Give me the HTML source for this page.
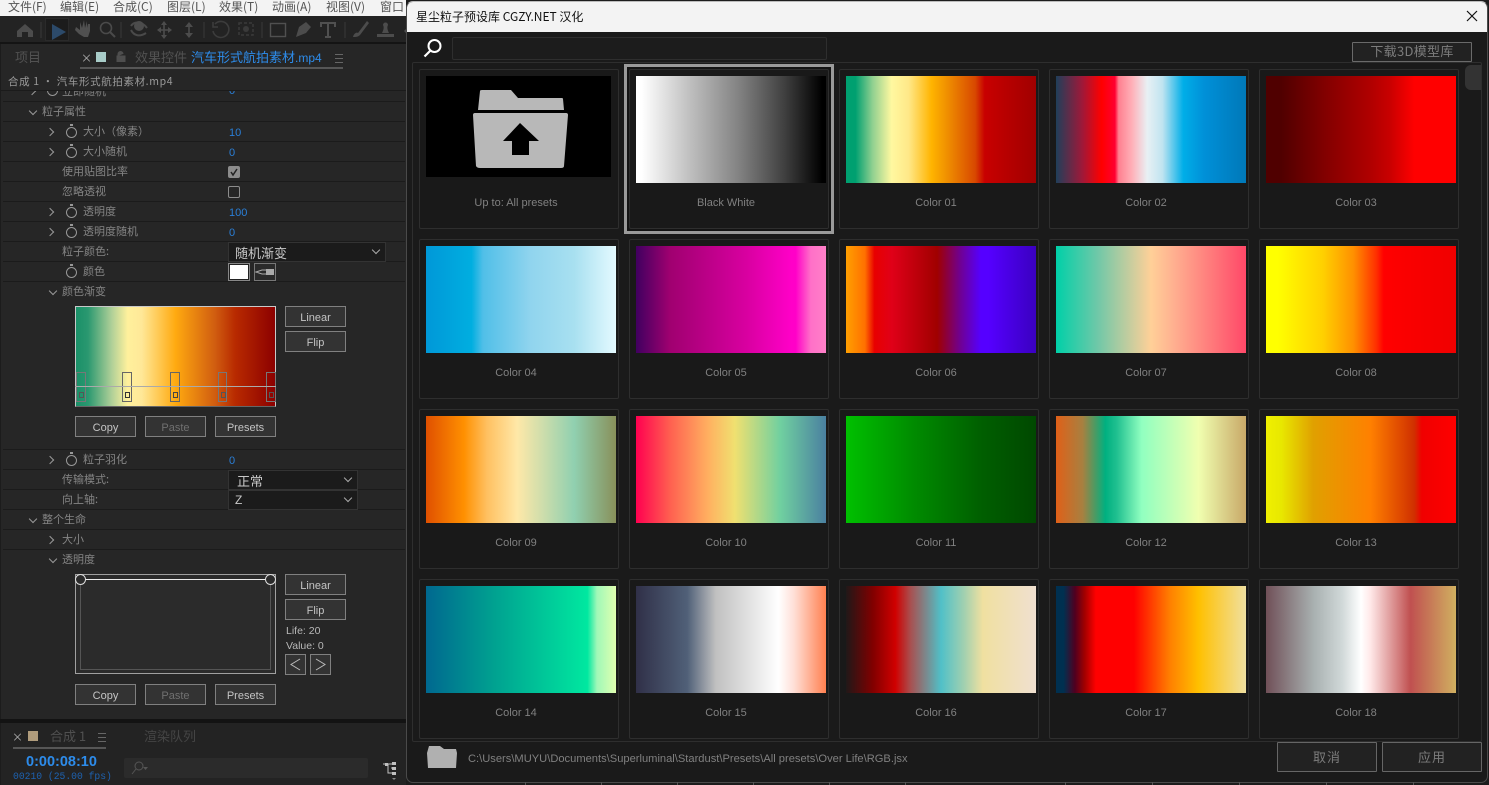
<!DOCTYPE html>
<html lang="zh"><head><meta charset="utf-8"><title>星尘粒子预设库</title>
<style>
*{box-sizing:border-box}
html,body{margin:0;padding:0;width:1489px;height:785px;overflow:hidden;background:#1c1c1c}
body{position:relative;font-family:"Liberation Sans","WenQuanYi Zen Hei","Noto Sans CJK SC",sans-serif}
div,span,svg{position:absolute}
.t{white-space:nowrap;line-height:16px;height:16px;font-size:11px;color:#858585;font-family:"WenQuanYi Zen Hei","Noto Sans CJK SC",sans-serif}
.v{color:#2a7fd8;font-size:11px;left:229px;font-family:"Liberation Sans",sans-serif;margin-top:1px}
.m{color:#555;font-size:12px;top:-1px}
.rl{left:3px;width:402px;height:1px;background:#1b1b1b}
.cr{width:6px;height:6px;border-top:1px solid #999;border-right:1px solid #999;transform:rotate(45deg)}
.cd{width:6px;height:6px;border-bottom:1px solid #999;border-right:1px solid #999;transform:rotate(45deg)}
.sw{width:11px;height:11px;border:1.5px solid #989898;border-radius:50%;left:66px}
.sw:before{content:"";position:absolute;left:3px;top:-4px;width:3px;height:2px;background:#989898}
.b{height:21px;width:61px;border:1px solid #808080;background:#333;color:#c4c4c4;font:11px/23px "Liberation Sans",sans-serif;text-align:center}
.sel{background:#1b1b1b;border:1px solid #333;height:20px;color:#c8c8c8;font-size:13px;line-height:19px;padding-left:6px;font-family:"WenQuanYi Zen Hei","Noto Sans CJK SC",sans-serif}
.sel i{position:absolute;right:6px;top:4px;width:6px;height:6px;border-bottom:1px solid #aaa;border-right:1px solid #aaa;transform:rotate(45deg)}
.st{top:372px;width:10px;height:30px;border:1.400px solid #777}
.st i{position:absolute;left:1.5px;top:19px;width:5px;height:6px;border:1px solid #555}
.c{width:200px;height:160px;border:1px solid #2e2e2e;border-radius:2px;background:#191919}
.g{left:6px;top:6px;width:190px;height:107px}
.l{left:0;width:192px;top:125px;text-align:center;font:11px/16px "Liberation Sans",sans-serif;color:#808080}
.ic{stroke:#4a4a4a;fill:none}
.tk{top:782px;width:1px;height:3px;background:#555}
</style></head><body>

<!-- Left app -->
<div style="left:0;top:0;width:406px;height:16px;background:#f3f3f3"></div>
<span class="t m" style="left:8px">文件(F)</span><span class="t m" style="left:60px">编辑(E)</span><span class="t m" style="left:113px">合成(C)</span><span class="t m" style="left:167px">图层(L)</span><span class="t m" style="left:219px">效果(T)</span><span class="t m" style="left:272px">动画(A)</span><span class="t m" style="left:326px">视图(V)</span><span class="t m" style="left:380px">窗口</span>

<div style="left:0;top:16px;width:406px;height:26px;background:#232323"></div>
<div style="left:45px;top:18px;width:24px;height:23px;background:#1c1c1c;border:1px solid #2a2a2a"></div>
<svg style="left:0;top:16px" width="406" height="26" viewBox="0 16 406 26">
<path d="M17 37V31L25 24 33 31V37H28V32H22V37Z" fill="#4c4c4c"/>
<path d="M52 24L66 32 52 40Z" fill="#2c4a6a"/>
<path d="M75 30L79 34 84 37H88L90 31V24H88L87 28V21L85 28 84 20 82 28 80 22 80 30 76 27Z" fill="#505050"/>
<circle cx="106" cy="28" r="5.5" class="ic" stroke-width="1.6"/><path d="M110 32L115 37" class="ic" stroke-width="2"/>
<path d="M131 26C134 21 142 21 147 28M146 33C140 37 134 36 131 30" class="ic" stroke-width="2"/><circle cx="139" cy="26" r="5" fill="#4c4c4c"/>
<path d="M164 24V36M158 30H170" stroke="#4c4c4c" stroke-width="1.6"/><path d="M164 21L161 25H167ZM164 39L161 35H167ZM157 30L161 27V33ZM172 30L168 27V33Z" fill="#4c4c4c"/>
<path d="M189 25V35" stroke="#4c4c4c" stroke-width="1.6"/><path d="M189 22L185 27H193ZM189 38L185 33H193Z" fill="#4c4c4c"/>
<path d="M215 24A8 8 0 1 1 213 31M213 22V27H218" stroke="#3c3c3c" stroke-width="1.6" fill="none"/>
<rect x="239" y="23" width="14" height="12" stroke="#3a3a3a" stroke-dasharray="3 2" fill="none" stroke-width="1.5"/><circle cx="246" cy="29" r="3" fill="#3a3a3a"/>
<rect x="270.500" y="23.500" width="15" height="13" stroke="#505050" stroke-width="1.400" fill="none"/>
<path d="M296 37L299 27 306 22 311 27 306 33Z" fill="#4c4c4c"/>
<path d="M321 27V23H335V27M328 23V37M325 37H331" stroke="#505050" stroke-width="2" fill="none"/>
<path d="M353 37C354 33 357 32 358 33L367 21 369 23 360 35C358 37 356 37 353 37Z" fill="#4c4c4c"/>
<path d="M377 37V34H394V37ZM382 33C384 29 384 27 383 25A2.500 2.500 0 1 1 388 25C387 27 387 29 389 33Z" fill="#4c4c4c"/>
<path d="M404 31L408 27V35Z" fill="#4c4c4c"/>
<path d="M41 22V38M121 22V38M204 22V38M262 22V38M345 22V38" stroke="#3a3a3a"/>
</svg>
<div style="left:0;top:42px;width:406px;height:2px;background:#141414"></div>
<div style="left:1px;top:44px;width:405px;height:678px;background:#262626"></div>

<span class="t" style="left:15px;top:49px;font-size:13px;color:#525252">项目</span>
<span class="t" style="left:81px;top:50px;font-size:11px;color:#b0b0b0">×</span>
<div style="left:96px;top:52px;width:10px;height:10px;background:#a8ccc8"></div>
<svg style="left:116px;top:51px" width="10" height="11"><path d="M2 5V3A2.500 2.500 0 0 1 7 3M1 5H9V11H1Z" fill="#4e4e4e" stroke="#4e4e4e"/></svg>
<span class="t" style="left:135px;top:49px;font-size:13px;color:#525252">效果控件</span>
<span class="t" style="left:191px;top:49px;font-size:13px;color:#2d8ceb">汽车形式航拍素材<span style="position:static;font-family:'Liberation Sans';font-size:12px">.mp4</span></span>
<div style="left:335px;top:54px;width:8px;height:9px;border-top:1px solid #666;border-bottom:1px solid #666"></div><div style="left:335px;top:58px;width:8px;height:1px;background:#666"></div>
<div style="left:80px;top:67px;width:263px;height:2px;background:#565656"></div>

<div style="left:1px;top:70px;width:405px;height:21px;border-bottom:1px solid #1b1b1b;background:#262626"></div>
<span class="t" style="left:8px;top:74px;font-size:10.500px;color:#9a9a9a;letter-spacing:.62px">合成 1 • 汽车形式航拍素材.mp4</span>
<div style="left:1px;top:91px;width:405px;height:7px;overflow:hidden">
<span class="t" style="left:61px;top:-8px;color:#808080">立即随机</span>
<span class="t v" style="left:228px;top:-9px">0</span>
<div class="cr" style="left:28px;top:-3px"></div>
<div class="sw" style="left:46px;top:-6px"></div>
</div>

<div class="rl" style="top:101px"></div><div class="rl" style="top:121px"></div><div class="rl" style="top:141px"></div><div class="rl" style="top:161px"></div><div class="rl" style="top:181px"></div><div class="rl" style="top:201px"></div><div class="rl" style="top:221px"></div><div class="rl" style="top:241px"></div><div class="rl" style="top:261px"></div><div class="rl" style="top:281px"></div><div class="rl" style="top:449px"></div><div class="rl" style="top:469px"></div><div class="rl" style="top:489px"></div><div class="rl" style="top:509px"></div><div class="rl" style="top:529px"></div><div class="rl" style="top:549px"></div>

<div class="cd" style="left:30px;top:108px"></div><span class="t" style="left:42px;top:103px">粒子属性</span>
<div class="cr" style="left:47px;top:129px"></div><div class="sw" style="top:127px"></div><span class="t" style="left:83px;top:123px">大小（像素）</span><span class="t v" style="top:124px">10</span>
<div class="cr" style="left:47px;top:149px"></div><div class="sw" style="top:147px"></div><span class="t" style="left:83px;top:143px">大小随机</span><span class="t v" style="top:144px">0</span>
<span class="t" style="left:62px;top:163px">使用贴图比率</span>
<div style="left:228px;top:166px;width:12px;height:12px;background:#8c8c8c;border-radius:2px"></div>
<svg style="left:228px;top:166px" width="12" height="12"><path d="M3 6L5 9 9 3" stroke="#222" stroke-width="1.500" fill="none"/></svg>
<span class="t" style="left:62px;top:183px">忽略透视</span>
<div style="left:228px;top:186px;width:12px;height:12px;border:1.500px solid #8c8c8c;border-radius:2px"></div>
<div class="cr" style="left:47px;top:209px"></div><div class="sw" style="top:207px"></div><span class="t" style="left:83px;top:203px">透明度</span><span class="t v" style="top:204px">100</span>
<div class="cr" style="left:47px;top:229px"></div><div class="sw" style="top:227px"></div><span class="t" style="left:83px;top:223px">透明度随机</span><span class="t v" style="top:224px">0</span>
<span class="t" style="left:62px;top:243px">粒子颜色:</span>
<div class="sel" style="left:228px;top:242px;width:158px">随机渐变<i></i></div>
<div class="sw" style="top:267px"></div><span class="t" style="left:83px;top:263px">颜色</span>
<div style="left:228px;top:263px;width:22px;height:18px;border:1px solid #888;background:#fff;box-shadow:inset 0 0 0 1px #222"></div>
<div style="left:254px;top:263px;width:22px;height:18px;border:1px solid #777;background:#2a2a2a"></div>
<svg style="left:255px;top:266px" width="20" height="12"><path d="M1 6L7 4H13V8H7Z" stroke="#aaa" fill="none"/><rect x="11" y="3" width="8" height="6" fill="#aaa"/></svg>
<div class="cd" style="left:50px;top:288px"></div><span class="t" style="left:62px;top:283px">颜色渐变</span>

<div style="left:75px;top:306px;width:201px;height:101px;border:1px solid #c8c8c8;border-bottom-color:#666;background:linear-gradient(90deg,#1a9068 0,#2a9870 6%,#b0d098 18%,#fff09c 26%,#ffe898 33%,#ffaa10 50%,#d05c10 70%,#b82a00 80%,#8c0000 100%)"></div>
<div class="st" style="left:76px"><i></i></div><div class="st" style="left:122px;border-color:#666"><i style="border-color:#333"></i></div><div class="st" style="left:170px;border-color:#666"><i style="border-color:#444"></i></div><div class="st" style="left:218px;width:9px;border-color:#777"><i></i></div><div class="st" style="left:266px"><i></i></div>
<div style="left:75px;top:386px;width:201px;height:1px;background:#aaa"></div>
<div class="b" style="left:285px;top:306px">Linear</div><div class="b" style="left:285px;top:331px">Flip</div>
<div class="b" style="left:75px;top:416px">Copy</div><div class="b" style="left:145px;top:416px;color:#707070">Paste</div><div class="b" style="left:215px;top:416px">Presets</div>

<div class="cr" style="left:47px;top:457px"></div><div class="sw" style="top:455px"></div><span class="t" style="left:83px;top:451px">粒子羽化</span><span class="t v" style="top:452px">0</span>
<span class="t" style="left:62px;top:471px">传输模式:</span><div class="sel" style="left:228px;top:470px;width:130px;padding-left:8px">正常<i></i></div>
<span class="t" style="left:62px;top:491px">向上轴:</span><div class="sel" style="left:228px;top:490px;width:130px;font-family:'Liberation Sans';font-size:12px">Z<i></i></div>
<div class="cd" style="left:30px;top:516px"></div><span class="t" style="left:42px;top:511px">整个生命</span>
<div class="cr" style="left:47px;top:537px"></div><span class="t" style="left:62px;top:531px">大小</span>
<div class="cd" style="left:50px;top:556px"></div><span class="t" style="left:62px;top:551px">透明度</span>

<div style="left:75px;top:574px;width:201px;height:100px;border:1px solid #a0a0a0;background:#2b2b2b"></div>
<div style="left:80px;top:579px;width:191px;height:91px;border:1px solid #555;border-top:0"></div>
<div style="left:80px;top:579px;width:190px;height:1px;background:#eee"></div>
<div style="left:75px;top:574px;width:11px;height:11px;border:1px solid #ddd;border-radius:50%;background:#2b2b2b"></div>
<div style="left:265px;top:574px;width:11px;height:11px;border:1px solid #ddd;border-radius:50%;background:#2b2b2b"></div>
<div class="b" style="left:285px;top:574px">Linear</div><div class="b" style="left:285px;top:599px">Flip</div>
<span class="t" style="left:286px;top:623px;font:10.500px/16px 'Liberation Sans';color:#b8b8b8">Life: 20</span>
<span class="t" style="left:286px;top:638px;font:10.500px/16px 'Liberation Sans';color:#b8b8b8">Value: 0</span>
<div class="b" style="left:285px;top:654px;width:21px"></div><div class="b" style="left:310px;top:654px;width:21px"></div>
<svg style="left:285px;top:654px" width="46" height="21"><path d="M15 5L6 10.500 15 16M31 5L40 10.500 31 16" stroke="#bbb" fill="none"/></svg>
<div class="b" style="left:75px;top:684px">Copy</div><div class="b" style="left:145px;top:684px;color:#707070">Paste</div><div class="b" style="left:215px;top:684px">Presets</div>

<div style="left:0;top:719px;width:406px;height:4px;background:#131313"></div>
<div style="left:1px;top:723px;width:405px;height:62px;background:#232323"></div>
<span class="t" style="left:12px;top:729px;font-size:11px;color:#b0b0b0">×</span>
<div style="left:28px;top:731px;width:10px;height:10px;background:#b09c7c"></div>
<span class="t" style="left:50px;top:728px;font-size:13px;color:#505050">合成 1</span>
<div style="left:98px;top:733px;width:8px;height:9px;border-top:1px solid #666;border-bottom:1px solid #666"></div><div style="left:98px;top:737px;width:8px;height:1px;background:#666"></div>
<span class="t" style="left:144px;top:728px;font-size:13px;color:#454545">渲染队列</span>
<div style="left:13px;top:747px;width:93px;height:2px;background:#565656"></div>
<span class="t" style="left:26px;top:754px;font:bold 14.500px/16px 'Liberation Sans';color:#2d8ceb">0:00:08:10</span>
<span class="t" style="left:13px;top:769px;font:9.700px/16px 'Liberation Mono';color:#1e62b0">00210 (25.00 fps)</span>
<div style="left:124px;top:758px;width:244px;height:20px;background:#2b2b2b;border-radius:2px"></div>
<svg style="left:130px;top:760px" width="20" height="16"><circle cx="9" cy="6" r="4" stroke="#555" fill="none"/><path d="M6 9L2 14" stroke="#555"/><path d="M13 7H18L15.500 10Z" fill="#555"/></svg>
<svg style="left:382px;top:761px" width="18" height="20"><path d="M1 3H13M6 3V12H10M9 7H13" stroke="#c0c0c0" fill="none"/><rect x="3" y="2" width="3" height="3" fill="#c0c0c0"/><rect x="10" y="1" width="4" height="3" fill="#c0c0c0"/><rect x="10" y="6" width="4" height="3" fill="#c0c0c0"/><rect x="10" y="11" width="4" height="3" fill="#c0c0c0"/><path d="M10 17H14L12 19Z" fill="#888"/></svg>

<!-- Dialog -->
<div style="left:406px;top:1px;width:1082px;height:782px;background:#1a1a1a;border:1px solid #4a4a4a;border-top-color:#bbb;border-radius:7px"></div>
<div style="left:407px;top:2px;width:1080px;height:30px;background:#f3f3f3;border-radius:6px 6px 0 0"></div>
<span class="t" style="left:416px;top:8px;font:12px/18px 'Noto Sans CJK SC','Liberation Sans',sans-serif;height:18px;color:#111">星尘粒子预设库 CGZY.NET 汉化</span>
<svg style="left:1466px;top:10px" width="12" height="12"><path d="M1 1L11 11M11 1L1 11" stroke="#111" stroke-width="1.200"/></svg>

<svg style="left:423px;top:38px" width="20" height="20"><circle cx="11.500" cy="8" r="6" stroke="#fff" stroke-width="2" fill="none"/><path d="M7 13L1.500 18.500" stroke="#fff" stroke-width="2.200"/></svg>
<div style="left:452px;top:37px;width:375px;height:23px;background:#1c1c1c;border:1px solid #2e2e2e;border-radius:2px"></div>
<div style="left:1352px;top:42px;width:120px;height:20px;background:#222;border:1px solid #6a6a6a;border-radius:1px;text-align:center;font:13px/16px 'WenQuanYi Zen Hei','Noto Sans CJK SC',sans-serif;color:#7c7c7c;letter-spacing:.3px">下载3D模型库</div>

<div style="left:412px;top:62px;width:1070px;height:680px;border:1px solid #2e2e2e;border-radius:2px"></div>
<div style="left:1465px;top:65px;width:16px;height:25px;background:#333;border-radius:6px 0 0 6px"></div>

<!-- Row 1 -->
<div class="c" style="left:419px;top:69px"><div style="left:6px;top:6px;width:185px;height:101px;background:#000"></div><span class="l">Up to: All presets</span></div>
<svg style="left:470px;top:86px" width="102" height="84" viewBox="470 86 102 84"><path d="M478 110L480 91Q480 90 482 90H511L518 98H562Q563 98 563 99L564 110Z" fill="#b8b8b8"/><path d="M473 115Q473 113 475 113H566Q568 113 568 115L564 166Q564 168 561 168H480Q477 168 476 166ZM520 123L503 141H512V155H529V141H539Z" fill="#b8b8b8" fill-rule="evenodd"/></svg>
<div style="left:624px;top:64px;width:210px;height:170px;border:3px solid #9a9a9a;background:#141414"></div>
<div class="c" style="left:629px;top:69px"><div class="g" style="background:linear-gradient(90deg,#fff 0,#fff 3%,#c0c0c0 28%,#808080 55%,#404040 78%,#000 98%)"></div><span class="l">Black White</span></div>
<div class="c" style="left:839px;top:69px"><div class="g" style="background:linear-gradient(90deg,#00a070 0,#00a070 5%,#90d090 14%,#fff8a0 24%,#ffe888 33%,#ffb400 45%,#f09000 53%,#d84800 68%,#c80000 73%,#a00000 100%)"></div><span class="l">Color 01</span></div>
<div class="c" style="left:1049px;top:69px"><div class="g" style="background:linear-gradient(90deg,#203f5a 0,#a01838 14%,#ff0000 24%,#ff0030 31%,#ff8090 33%,#ffb0b8 40%,#e8f0f4 48%,#c0e4f0 56%,#00aee8 67%,#0090d8 78%,#0078b8 100%)"></div><span class="l">Color 02</span></div>
<div class="c" style="left:1259px;top:69px"><div class="g" style="background:linear-gradient(90deg,#500000 0,#500000 8%,#800000 30%,#b00000 55%,#c80000 65%,#ff0000 78%,#ff0000 100%)"></div><span class="l">Color 03</span></div>

<!-- Row 2 -->
<div class="c" style="left:419px;top:239px"><div class="g" style="background:linear-gradient(90deg,#0098d8 0,#00aee0 24%,#50bfe8 30%,#90d4ee 55%,#a8e0f0 78%,#e4faff 100%)"></div><span class="l">Color 04</span></div>
<div class="c" style="left:629px;top:239px"><div class="g" style="background:linear-gradient(90deg,#400060 0,#a00070 18%,#d800a0 58%,#ff00c8 82%,#ff00c8 84%,#ff70c8 92%,#ff80c8 100%)"></div><span class="l">Color 05</span></div>
<div class="c" style="left:839px;top:239px"><div class="g" style="background:linear-gradient(90deg,#ffa000 0,#ff7000 10%,#e80000 15%,#e00018 24%,#a00000 48%,#700090 60%,#5500ff 71%,#5500ff 75%,#3a00c0 100%)"></div><span class="l">Color 06</span></div>
<div class="c" style="left:1049px;top:239px"><div class="g" style="background:linear-gradient(90deg,#00d0a8 0,#70c8a8 22%,#ffd098 50%,#ffb090 62%,#ff4868 100%)"></div><span class="l">Color 07</span></div>
<div class="c" style="left:1259px;top:239px"><div class="g" style="background:linear-gradient(90deg,#ffff00 0,#ffff00 6%,#ffd000 30%,#ff9000 46%,#ff3000 58%,#ff0000 62%,#f00000 100%)"></div><span class="l">Color 08</span></div>

<!-- Row 3 -->
<div class="c" style="left:419px;top:409px"><div class="g" style="background:linear-gradient(90deg,#e05000 0,#ff9000 20%,#ffc060 32%,#ffe8a8 48%,#90d0b0 78%,#88905a 100%)"></div><span class="l">Color 09</span></div>
<div class="c" style="left:629px;top:409px"><div class="g" style="background:linear-gradient(90deg,#ff0050 0,#ff6050 18%,#ffb060 38%,#f0e070 52%,#70d0a0 76%,#4a80a0 100%)"></div><span class="l">Color 10</span></div>
<div class="c" style="left:839px;top:409px"><div class="g" style="background:linear-gradient(90deg,#00c000 0,#008c00 35%,#006000 70%,#004800 100%)"></div><span class="l">Color 11</span></div>
<div class="c" style="left:1049px;top:409px"><div class="g" style="background:linear-gradient(90deg,#e06018 0,#a88040 14%,#00b080 26%,#20c090 32%,#90ffc0 45%,#f0ffb0 75%,#c8a868 100%)"></div><span class="l">Color 12</span></div>
<div class="c" style="left:1259px;top:409px"><div class="g" style="background:linear-gradient(90deg,#f0f000 0,#e8e800 8%,#e0a000 25%,#ff8000 55%,#d03000 78%,#f00000 82%,#ff0000 100%)"></div><span class="l">Color 13</span></div>

<!-- Row 4 -->
<div class="c" style="left:419px;top:579px"><div class="g" style="background:linear-gradient(90deg,#006890 0,#00a090 35%,#00e8a0 85%,#a0f8b8 90%,#e0ffb0 100%)"></div><span class="l">Color 14</span></div>
<div class="c" style="left:629px;top:579px"><div class="g" style="background:linear-gradient(90deg,#303048 0,#506078 27%,#c0c0c0 42%,#ffffff 75%,#ffe0d8 83%,#ff8050 100%)"></div><span class="l">Color 15</span></div>
<div class="c" style="left:839px;top:579px"><div class="g" style="background:linear-gradient(90deg,#201818 0,#800000 14%,#d00000 26%,#a85050 34%,#50c0c8 50%,#a0d0b0 62%,#f0e0a0 72%,#f0e0d0 100%)"></div><span class="l">Color 16</span></div>
<div class="c" style="left:1049px;top:579px"><div class="g" style="background:linear-gradient(90deg,#003050 0,#003050 4%,#500020 10%,#a00000 15%,#ff0000 21%,#ff0000 41%,#ff8000 60%,#ffc000 75%,#f0e0a0 100%)"></div><span class="l">Color 17</span></div>
<div class="c" style="left:1259px;top:579px"><div class="g" style="background:linear-gradient(90deg,#705058 0,#a8b0b0 25%,#d0d8d8 40%,#fff 50%,#ffe8e8 55%,#c05050 76%,#d0b060 100%)"></div><span class="l">Color 18</span></div>

<!-- Footer -->
<svg style="left:427px;top:745px" width="30" height="24"><path d="M2 1H13L17 4H29L30 8 29 23H1L0 8Z" fill="#b0b0b0"/></svg>
<span class="t" style="left:468px;top:751px;font:11.150px/16px 'Liberation Sans',sans-serif;color:#808080">C:\Users\MUYU\Documents\Superluminal\Stardust\Presets\All presets\Over Life\RGB.jsx</span>
<div style="left:1277px;top:742px;width:100px;height:30px;background:#222;border:1px solid #666;border-radius:1px;text-align:center;font:13px/27px 'WenQuanYi Zen Hei','Noto Sans CJK SC',sans-serif;color:#7c7c7c;letter-spacing:1px">取消</div>
<div style="left:1382px;top:742px;width:100px;height:30px;background:#222;border:1px solid #666;border-radius:1px;text-align:center;font:13px/27px 'WenQuanYi Zen Hei','Noto Sans CJK SC',sans-serif;color:#7c7c7c;letter-spacing:1px">应用</div>

<div class="tk" style="left:525px"></div><div class="tk" style="left:601px"></div><div class="tk" style="left:677px"></div><div class="tk" style="left:753px"></div><div class="tk" style="left:829px"></div><div class="tk" style="left:905px"></div><div class="tk" style="left:1065px"></div><div class="tk" style="left:1152px"></div><div class="tk" style="left:1239px"></div><div class="tk" style="left:1326px"></div><div class="tk" style="left:1413px"></div>
</body></html>
